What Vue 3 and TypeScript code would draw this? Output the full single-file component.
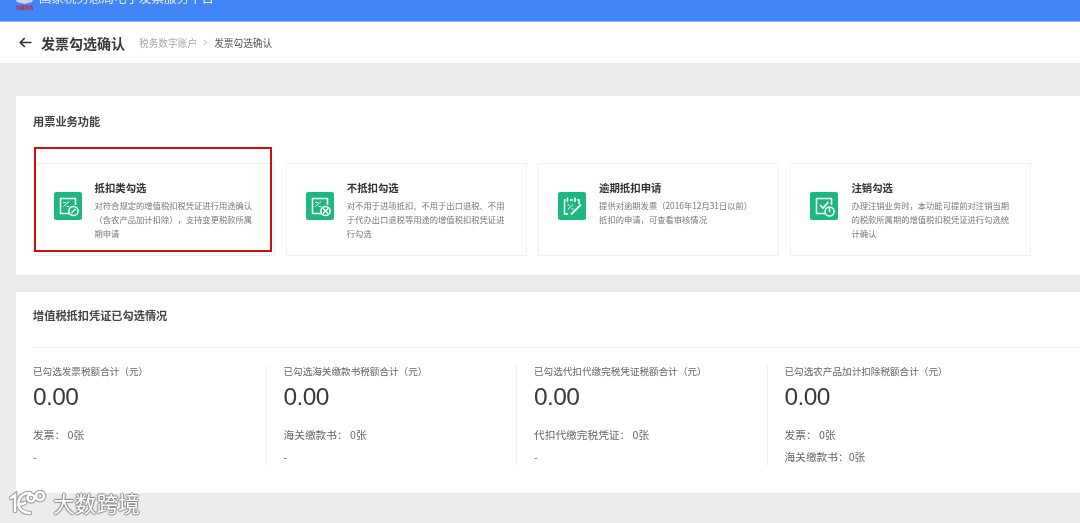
<script setup lang="ts">
interface Service { title: string; lines: string[]; icon: string }
interface Stat { label: string; rows: string[] }

const services: Service[] = [
  { title: '抵扣类勾选', icon: 'check', lines: ['对符合规定的增值税扣税凭证进行用途确认', '（含农产品加计扣除），支持变更税款所属', '期申请'] },
  { title: '不抵扣勾选', icon: 'cross', lines: ['对不用于进项抵扣、不用于出口退税、不用', '于代办出口退税等用途的增值税扣税凭证进', '行勾选'] },
  { title: '逾期抵扣申请', icon: 'late', lines: ['提供对逾期发票（2016年12月31日以前）', '抵扣的申请，可查看审核情况'] },
  { title: '注销勾选', icon: 'power', lines: ['办理注销业务时，本功能可提前对注销当期', '的税款所属期的增值税扣税凭证进行勾选统', '计确认'] },
]

const stats: Stat[] = [
  { label: '已勾选发票税额合计（元）', rows: ['发票： 0张', '-'] },
  { label: '已勾选海关缴款书税额合计（元）', rows: ['海关缴款书： 0张', '-'] },
  { label: '已勾选代扣代缴完税凭证税额合计（元）', rows: ['代扣代缴完税凭证： 0张', '-'] },
  { label: '已勾选农产品加计扣除税额合计（元）', rows: ['发票： 0张', '海关缴款书：0张'] },
]
</script>

<template>
  <div class="page">
    <header class="top">
      <div class="logo">
        <svg class="shield" width="19" height="4" viewBox="0 0 19 4"><path d="M1 0 L2 2 L9.500 4 L17 2 L18 0 Z" fill="#c9d3e6" /></svg>
        <span class="logo-text">中国税务</span>
      </div>
      <span class="top-title">国家税务总局电子发票服务平台</span>
    </header>

    <div class="crumbs">
      <svg class="back" width="13" height="11" viewBox="0 0 13 11"><path d="M12.500 5.500H1.500M5.800 1 1.300 5.500 5.800 10" fill="none" stroke="#333" stroke-width="1.700" /></svg>
      <span class="crumb-title">发票勾选确认</span>
      <span class="crumb-link">税务数字账户</span>
      <svg class="chev" width="5" height="7" viewBox="0 0 5 7"><path d="M1 .8 3.800 3.500 1 6.200" fill="none" stroke="#aaa" stroke-width=".9" /></svg>
      <span class="crumb-now">发票勾选确认</span>
    </div>

    <section class="panel services">
      <h2 class="panel-title">用票业务功能</h2>
      <div class="cards">
        <article v-for="s in services" :key="s.title" class="card">
          <svg class="ic" width="28" height="28" viewBox="0 0 28 28">
            <rect width="28" height="28" rx="2" fill="#1fb780" />
            <g fill="none" stroke="#fff" stroke-width="1.500">
              <template v-if="s.icon === 'late'">
                <path d="M19 8H21V12M15 8H12M8 8H6.500V22H10" />
                <path d="M9.500 5.500V10M17 5.500V10" />
                <path d="M13 22.500 23 12.500" stroke-width="1.800" />
                <path d="M9.800 17.500 15 12.500" stroke-width="1" />
                <path d="M9.500 13H11.500M13.500 17H15.500" stroke-width="1" />
              </template>
              <template v-else>
                <path d="M15.500 21.500H6.500V6.500H21.500V13" />
                <template v-if="s.icon === 'power'">
                  <path d="M10 13 13 16 18.500 10" stroke-width="1.700" />
                  <circle cx="19.500" cy="19.500" r="4.500" />
                  <path d="M19.500 15.500V20" />
                </template>
                <template v-else>
                  <path d="M9.500 14.500 15 9.500" stroke-width="1" />
                  <path d="M9.300 10.500H12M12.500 14.500H15.200" stroke-width="1" />
                  <circle cx="19.500" cy="19" r="4.600" />
                  <path v-if="s.icon === 'check'" d="M17.500 21 21.500 17" stroke-width="1.400" />
                  <path v-else d="M17 16.500 22 21.500M22 16.500 17 21.500" stroke-width="1.400" />
                </template>
              </template>
            </g>
          </svg>
          <div class="card-body">
            <h3 class="card-title">{{ s.title }}</h3>
            <p v-for="l in s.lines" :key="l" class="card-line">{{ l }}</p>
          </div>
        </article>
        <div class="highlight"></div>
      </div>
    </section>

    <section class="panel summary">
      <h2 class="panel-title summary-title">增值税抵扣凭证已勾选情况</h2>
      <div class="stats">
        <div v-for="s in stats" :key="s.label" class="stat">
          <div class="stat-label">{{ s.label }}</div>
          <div class="stat-value">0.00</div>
          <div v-for="r in s.rows" :key="r" class="stat-row">{{ r }}</div>
        </div>
      </div>
    </section>

    <div class="mark">
      <svg width="42" height="26" viewBox="0 0 42 26">
        <g fill="none" stroke-linecap="round">
          <g stroke="#9c9c9c" stroke-width="4.600">
            <path d="M2 8 6 5V21" />
            <path d="M21 3C13 3 9.500 8 9.500 13C9.500 19 14 23 21 23" />
            <circle cx="22" cy="8" r="3.500" />
            <circle cx="31" cy="6" r="4" />
            <path d="M9 15 16 13" />
          </g>
          <g stroke="#fff" stroke-width="2.500">
            <path d="M2 8 6 5V21" />
            <path d="M21 3C13 3 9.500 8 9.500 13C9.500 19 14 23 21 23" />
            <circle cx="22" cy="8" r="3.500" />
            <circle cx="31" cy="6" r="4" />
            <path d="M9 15 16 13" />
          </g>
        </g>
      </svg>
      <span class="mark-text">大数跨境</span>
    </div>
  </div>
</template>

<style>
html, body { margin: 0; background: #ececec; overflow: hidden; }
</style>

<style scoped>
.page {
  position: relative;
  width: 1080px;
  height: 523px;
  overflow: hidden;
  background: #ececec;
  color: #333;
  font-family: "Noto Sans CJK SC", "Liberation Sans", sans-serif;
  text-spacing-trim: space-all;
  filter: blur(0.35px);
}
.top {
  height: 21px;
  background: #4285f4;
  display: flex;
  align-items: flex-end;
  padding: 0 0 14px 15px;
  box-sizing: border-box;
  overflow: hidden;
}
.logo {
  width: 19px;
  height: 11px;
  margin-bottom: -4px;
  margin-right: 5px;
  flex: none;
  display: flex;
  flex-direction: column;
  align-items: center;
  overflow: hidden;
}
.shield { display: block; flex: none; }
.logo-text {
  font-size: 4.400px;
  line-height: 7px;
  color: #c8262e;
  white-space: nowrap;
  font-weight: 700;
}
.top-title {
  font-size: 12.500px;
  line-height: 18px;
  color: #e8f0fe;
  white-space: nowrap;
  flex: none;
}
.crumbs {
  height: 42px;
  background: #fff;
  box-sizing: border-box;
  border-top: 1px solid #8fb4f7;
  display: flex;
  align-items: center;
  padding-left: 19px;
}
.back { flex: none; margin-right: 9px; }
.crumb-title { font-size: 14px; font-weight: 700; color: #3a3a3a; margin-right: 14px; }
.crumb-link { font-size: 9.700px; color: #a9a9a9; margin-right: 6px; }
.chev { flex: none; margin-right: 6px; }
.crumb-now { font-size: 9.700px; color: #555; }

.panel { background: #fff; margin-left: 16px; }
.services { margin-top: 33px; height: 179px; padding: 17px 0 0 17px; box-sizing: border-box; }
.panel-title {
  margin: 0;
  font-size: 11.200px;
  line-height: 16px;
  font-weight: 700;
  color: #444;
}
.cards {
  position: relative;
  display: grid;
  grid-template-columns: repeat(4, 241px);
  column-gap: 11.300px;
  margin: 34px 0 0 0.500px;
}
.card {
  height: 93px;
  box-sizing: border-box;
  border: 1px solid #f1f1f1;
  display: flex;
  align-items: flex-start;
  padding: 28px 0 0 19px;
}
.ic { flex: none; margin-right: 13px; }
.card-body { margin-top: -12px; white-space: nowrap; }
.card-title {
  margin: 0 0 2px;
  font-size: 10.400px;
  line-height: 16px;
  font-weight: 700;
  color: #333;
}
.card-line {
  margin: 0;
  font-size: 8.300px;
  line-height: 14px;
  color: #777;
}
.highlight {
  position: absolute;
  left: 0.500px;
  top: -16px;
  width: 238px;
  height: 105px;
  box-sizing: border-box;
  border: 2px solid #d80c0c;
}
.summary { margin-top: 17px; height: 201px; padding-top: 15px; box-sizing: border-box; }
.summary-title {
  margin: 0 0 0 17px;
  padding: 0 0 23px;
  border-bottom: 1px solid #f0f0f0;
  line-height: 17px;
}
.stats {
  display: grid;
  grid-template-columns: repeat(4, 250.500px);
  margin: 16px 0 0 -1px;
}
.stat {
  height: 102px;
  padding-left: 17px;
  border-left: 1px solid #f0f0f0;
  box-sizing: border-box;
  white-space: nowrap;
  overflow: hidden;
}
.stat:first-child { border-left-color: transparent; }
.stat-label { font-size: 9.600px; line-height: 15px; color: #666; }
.stat-value {
  font-family: "Liberation Sans", sans-serif;
  font-size: 24.500px;
  letter-spacing: -0.600px;
  line-height: 30px;
  color: #3a3a3a;
  margin: 3px 0 12px;
}
.stat-row { font-size: 10.700px; line-height: 22px; color: #666; }
.mark {
  position: absolute;
  left: 9px;
  top: 490px;
  display: flex;
  align-items: center;
}
.mark-text {
  font-size: 21.700px;
  line-height: 26px;
  margin-left: 2px;
  color: #fff;
  text-shadow: 1px 0 1px #888, -1px 0 1px #888, 0 1px 1px #888, 0 -1px 1px #888;
}
</style>
